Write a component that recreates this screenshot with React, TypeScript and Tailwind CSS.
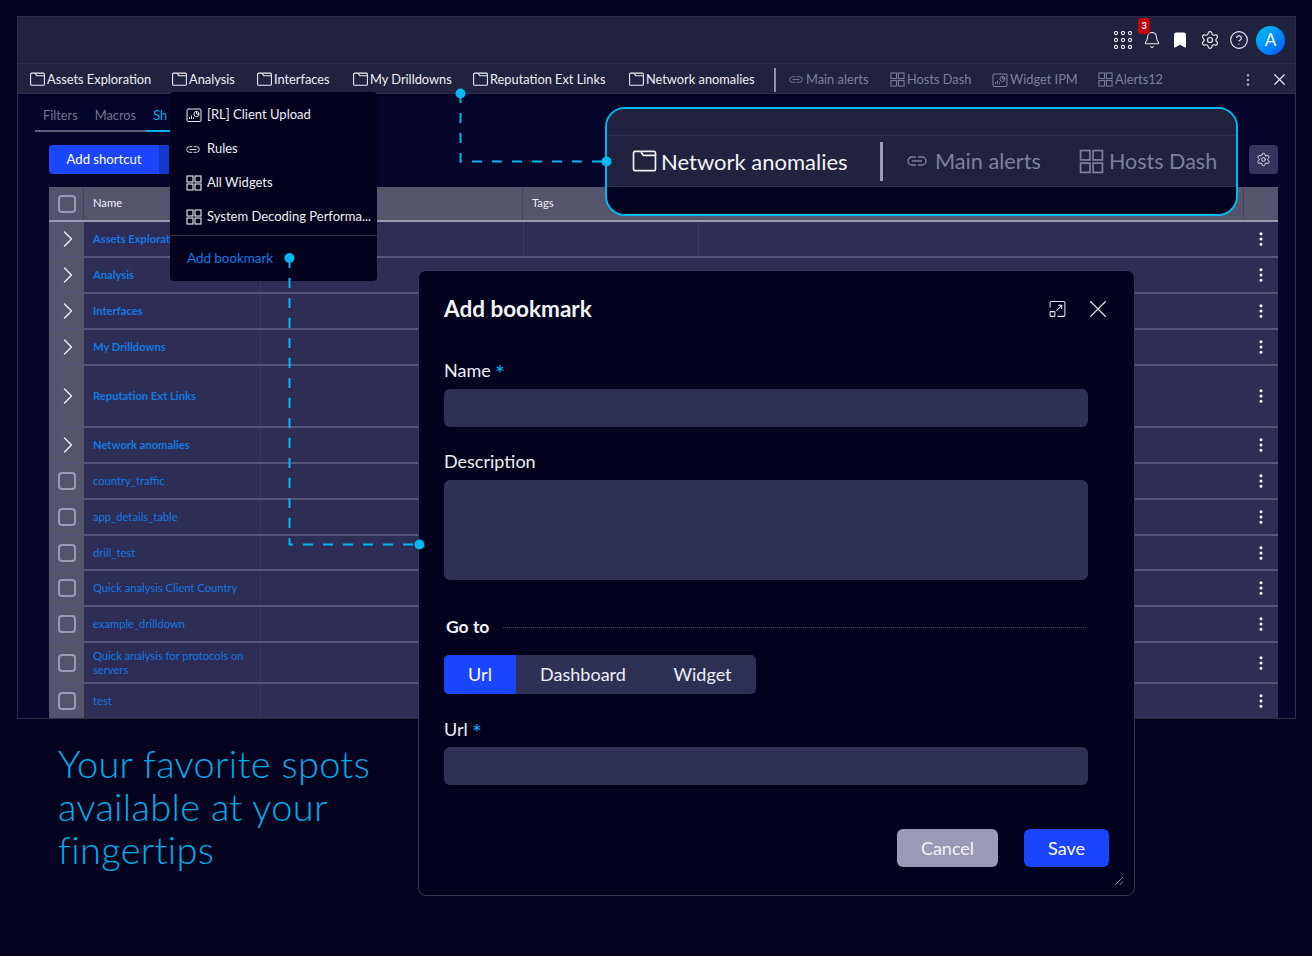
import { Bell, Bookmark, ChevronRight, CircleHelp, EllipsisVertical, Settings, X } from "lucide-react";

const FONT = "font-['Lato','Open_Sans',sans-serif]";

function FolderIcon({ size = 16 }: { size?: number }) {
  return (
    <svg width={size} height={size} viewBox="0 0 16 16" fill="none" stroke="currentColor" strokeWidth="1" className="shrink-0">
      <path d="M1.5 3a1 1 0 0 1 1-1h3.2l1.6 2.4h7.2v8a1 1 0 0 1-1 1H2.5a1 1 0 0 1-1-1z" />
      <path d="M6.2 2h7.3a1 1 0 0 1 1 1v1.4" />
    </svg>
  );
}

function GridIcon({ size = 16 }: { size?: number }) {
  return (
    <svg width={size} height={size} viewBox="0 0 16 16" fill="none" stroke="currentColor" strokeWidth="1.1" className="shrink-0">
      <rect x="1" y="1" width="6" height="6" />
      <rect x="9" y="1" width="6" height="6" />
      <rect x="1" y="9" width="6" height="6" />
      <rect x="9" y="9" width="6" height="6" />
    </svg>
  );
}

function LinkIcon({ size = 16 }: { size?: number }) {
  return (
    <svg width={size} height={size / 2} viewBox="0 0 20 10" fill="none" stroke="currentColor" strokeWidth="1.3" className="shrink-0">
      <path d="M9 1H5a4 4 0 0 0 0 8h4M11 1h4a4 4 0 0 1 0 8h-4M5 5h10" />
    </svg>
  );
}

function WidgetIcon({ size = 16 }: { size?: number }) {
  return (
    <svg width={size} height={size} viewBox="0 0 16 16" fill="none" stroke="currentColor" strokeWidth="1" className="shrink-0">
      <rect x="1" y="2" width="14" height="12.5" rx="1" />
      <circle cx="10.5" cy="7" r="2.6" />
      <path d="M10.5 4.4V7h2.6" />
      <path d="M3.5 12V10M5.5 12V8.5M7.5 12v-1.5" />
    </svg>
  );
}

function ExpandIcon() {
  return (
    <svg width="19" height="19" viewBox="0 0 18 18" fill="none" stroke="#e6e6f0" strokeWidth="1">
      <path d="M2 7V2.5a1 1 0 0 1 1-1h12a1 1 0 0 1 1 1v12a1 1 0 0 1-1 1h-6" />
      <rect x="2" y="11" width="4.5" height="4.5" rx="0.5" />
      <path d="M8 10l5-5M9.5 5H13v3.5" />
    </svg>
  );
}

function AppsIcon() {
  const dots = [2, 9, 16];
  return (
    <svg width="18" height="18" viewBox="0 0 18 18" fill="none" stroke="#e8e8f0" strokeWidth="1.1">
      {dots.map((y) => dots.map((x) => <circle key={`${x}-${y}`} cx={x} cy={y} r="1.6" />))}
    </svg>
  );
}

const NAV_FOLDERS = [
  { label: "Assets Exploration", w: "w-[142px]" },
  { label: "Analysis", w: "w-[85px]" },
  { label: "Interfaces", w: "w-[96px]" },
  { label: "My Drilldowns", w: "w-[120px]" },
  { label: "Reputation Ext Links", w: "w-[156px]" },
  { label: "Network anomalies", w: "w-[146px]" },
];

const NAV_DIM = [
  { label: "Main alerts", w: "w-[101px]", gap: "gap-[3px]", icon: <LinkIcon size={14} /> },
  { label: "Hosts Dash", w: "w-[102px]", gap: "gap-[2px]", icon: <GridIcon size={15} /> },
  { label: "Widget IPM", w: "w-[106px]", gap: "gap-[2px]", icon: <WidgetIcon size={16} /> },
  { label: "Alerts12", w: "w-[70px]", gap: "gap-[2px]", icon: <GridIcon size={15} /> },
];

const ROWS = [
  { name: "Assets Exploration", h: "h-[36px]", folder: true, first: true },
  { name: "Analysis", h: "h-[36px]", folder: true },
  { name: "Interfaces", h: "h-[36px]", folder: true },
  { name: "My Drilldowns", h: "h-[36px]", folder: true },
  { name: "Reputation Ext Links", h: "h-[62px]", folder: true },
  { name: "Network anomalies", h: "h-[36px]", folder: true },
  { name: "country_traffic", h: "h-[36px]" },
  { name: "app_details_table", h: "h-[36px]" },
  { name: "drill_test", h: "h-[35px]" },
  { name: "Quick analysis Client Country", h: "h-[36px]" },
  { name: "example_drilldown", h: "h-[36px]" },
  { name: "Quick analysis for protocols on servers", h: "h-[41px]" },
  { name: "test", h: "h-[34px]", last: true },
];

function Checkbox() {
  return <div className="ml-[1px] w-[18px] h-[18px] rounded-[4px] border-2 border-[#9a9ab4]" />;
}

function TableRow({ row }: { row: (typeof ROWS)[number] }) {
  return (
    <div className={`flex ${row.h} bg-[#2d2d55] ${row.last ? "" : "border-b-2 border-[#55557a]"}`}>
      <div className="w-[35px] bg-[#54546c] flex items-center justify-center text-[#e8e8f0]">
        {row.folder ? <ChevronRight size={28} strokeWidth={1.3} className="ml-[2px]" /> : <Checkbox />}
      </div>
      <div className={`w-[176px] pl-[9px] pr-[10px] flex items-center text-[11.2px] leading-[14px] text-[#1478e0] ${row.folder ? "font-bold" : ""}`}>
        <span>{row.name}</span>
      </div>
      <div className="flex-1 border-l border-[#3a3a60] flex">
        {row.first && (
          <>
            <div className="w-[263px] border-r border-[#3a3a60]" />
            <div className="w-[175px] border-r border-[#3a3a60]" />
          </>
        )}
      </div>
      <div className="w-[35px] flex items-center justify-center text-white">
        <EllipsisVertical size={18} strokeWidth={2} />
      </div>
    </div>
  );
}

function Field({ label, required, h, labelH = "h-[28px]" }: { label: string; required?: boolean; h: string; labelH?: string }) {
  return (
    <div className="flex flex-col w-[644px]">
      <div className={`flex text-[18px] leading-[18px] text-[#eeeef6] ${labelH}`}>
        {label}
        {required && <span className="text-[#00b0ea] text-[24px] leading-[18px] ml-[4px] relative top-[3px]">*</span>}
      </div>
      <div className={`${h} rounded-[6px] bg-[#2f3056]`} />
    </div>
  );
}

export default function App() {
  return (
    <div className={`relative w-[1312px] h-[956px] overflow-hidden bg-[#03021f] ${FONT}`}>
      {/* app window */}
      <div className="ml-[17px] mt-4 w-[1279px] h-[703px] border border-[#2b2b4a] bg-[#05052b] flex flex-col overflow-hidden">
        <div className="h-[47px] bg-[#21223f] border-b border-[#2c2d4c] flex items-center justify-end pr-[10px] text-[#e8e8f0]">
          <AppsIcon />
          <div className="relative ml-[11px]">
            <Bell size={18} strokeWidth={1.4} />
            <span className="absolute -left-[5px] -top-[13px] w-[12px] h-[16px] rounded-[2px] bg-[#c00010] text-white text-[9px] font-bold flex items-center justify-center">3</span>
          </div>
          <Bookmark size={18} fill="#ffffff" stroke="#ffffff" className="ml-[10px]" />
          <Settings size={20} strokeWidth={1.4} className="ml-[11px]" />
          <CircleHelp size={20} strokeWidth={1.4} className="ml-[9px]" />
          <div className="ml-[7px] w-[29px] h-[29px] rounded-full bg-gradient-to-br from-[#00c0f0] to-[#1a50ff] flex items-center justify-center text-white text-[17px]">A</div>
        </div>

        <div className="h-[30px] pt-[2px] bg-[#21223f] border-b border-[#2c2d4c] flex items-center pl-[11px] text-[12.8px] relative">
          {NAV_FOLDERS.map((f) => (
            <div key={f.label} className={`${f.w} shrink-0 flex items-center gap-[1px] text-[#eeeef6] whitespace-nowrap`}>
              <FolderIcon size={17} />
              <span>{f.label}</span>
            </div>
          ))}
          <div className="w-[2px] h-[24px] bg-[#8f92ad] mr-[13px]" />
          {NAV_DIM.map((f) => (
            <div key={f.label} className={`${f.w} ${f.gap} shrink-0 flex items-center text-[#7d8098] whitespace-nowrap`}>
              {f.icon}
              <span>{f.label}</span>
            </div>
          ))}
          <EllipsisVertical size={16} className="absolute right-[39px] text-[#a0a0b8]" />
          <X size={19} strokeWidth={1.5} className="absolute right-[6px] text-[#e8e8f0]" />
        </div>

        <div className="flex-1 min-h-0 pl-[17px] flex flex-col">
          <div className="w-[135px] h-[27px] mt-[12px] flex border-b-2 border-[#5f5f78] text-[12.8px] text-[#73748e] pl-2 gap-[17px] relative">
            <span>Filters</span>
            <span>Macros</span>
            <span className="text-[#00b0ea]">Sh</span>
            <div className="absolute right-0 -bottom-[2px] h-[2px] w-[24px] bg-[#00b0ea]" />
          </div>
          <div className="ml-[14px] mt-[13px] h-[29px] flex items-center justify-between pr-[17px]">
            <div className="flex h-full">
              <div className="w-[110px] bg-[#1a46ff] rounded-l-[4px] text-white text-[13.1px] flex items-center justify-center">Add shortcut</div>
              <div className="w-[10px] bg-[#1438c8]" />
            </div>
            <div className="w-[29px] h-[29px] rounded-[4px] bg-[#34345f] flex items-center justify-center text-[#e8e8f0]">
              <Settings size={15} strokeWidth={1.5} />
            </div>
          </div>

          {/* table */}
          <div className="ml-[14px] mr-[17px] mt-[13px] flex flex-col">
            <div className="flex h-[35px] bg-[#54546c] border-b-2 border-[#9a9ab4] text-[11.2px] text-[#eeeef6]">
              <div className="w-[35px] flex items-center justify-center border-r border-[#44445e]"><Checkbox /></div>
              <div className="w-[439px] pl-[9px] flex items-center border-r border-[#44445e]">Name</div>
              <div className="flex-1 pl-[9px] flex items-center">Tags</div>
              <div className="w-[35px] border-l border-[#44445e]" />
            </div>
            {ROWS.map((r) => (
              <TableRow key={r.name} row={r} />
            ))}
          </div>
        </div>
      </div>

      <h1 className="ml-[58px] mt-[23px] w-[330px] text-[38px] leading-[43px] font-light tracking-[0.3px] text-[#00aeea]">
        Your favorite spots available at your fingertips
      </h1>

      {/* bookmarks dropdown */}
      <div className="absolute left-[170px] top-[92px] w-[207px] h-[189px] rounded-[4px] bg-[#02021e] text-[13px] text-[#eeeef6] flex flex-col z-10">
        <div className="h-[34px] mt-[6px] pl-[16px] flex items-center gap-[5px]"><WidgetIcon /><span>[RL] Client Upload</span></div>
        <div className="h-[34px] pl-[16px] flex items-center gap-[7px]"><LinkIcon size={14} /><span>Rules</span></div>
        <div className="h-[34px] pl-[16px] flex items-center gap-[5px]"><GridIcon /><span>All Widgets</span></div>
        <div className="h-[34px] pl-[16px] flex items-center gap-[5px] whitespace-nowrap"><GridIcon /><span>System Decoding Performa...</span></div>
        <div className="h-[46px] mt-[1px] border-t border-[#2c2d4c] pl-[17px] flex items-center text-[13.4px] text-[#1478e0]">Add bookmark</div>
      </div>

      {/* zoomed nav callout */}
      <div className="absolute left-[605px] top-[107px] w-[633px] h-[109px] rounded-[20px] border-2 border-[#00b8f0] bg-[#03021f] overflow-hidden z-10">
        <div className="h-[27px] bg-[#21223f] border-b border-[#2e2f50]" />
        <div className="h-[51px] bg-[#21223f] border-b border-[#2e2f50] flex items-center pl-[24px] text-[22px] whitespace-nowrap">
          <span className="text-[#f2f2f8] flex items-center gap-[3px] w-[249px]"><FolderIcon size={27} />Network anomalies</span>
          <span className="w-[3px] h-[39px] bg-[#9a9db8] mr-[24px]" />
          <span className="text-[#7d8098] flex items-center gap-[8px] w-[172px] text-[21.7px]"><LinkIcon size={20} />Main alerts</span>
          <span className="text-[#7d8098] flex items-center gap-[5px] text-[21.5px]"><GridIcon size={25} />Hosts Dash</span>
        </div>
      </div>

      {/* add bookmark modal */}
      <div className="absolute left-[418px] top-[270px] w-[717px] h-[626px] rounded-[8px] border border-[#35355a] bg-[#02021e] pl-[25px] flex flex-col z-10">
        <div className="flex items-center justify-between h-[22px] mt-[27px] pr-[21px]">
          <h2 className="text-[22.5px] font-bold text-[#f4f4fa]">Add bookmark</h2>
          <div className="flex items-center gap-[16px] text-[#e6e6f0]">
            <ExpandIcon />
            <X size={30} strokeWidth={0.9} />
          </div>
        </div>
        <div className="mt-[41px]"><Field label="Name" required h="h-[38px]" /></div>
        <div className="mt-[25px]"><Field label="Description" h="h-[100px]" /></div>
        <div className="mt-[38px] ml-[2px] w-[640px] h-[18px] flex items-center gap-[14px]">
          <span className="text-[17.5px] font-bold text-[#f4f4fa]">Go to</span>
          <div className="flex-1 border-t border-dotted border-[#45455f]" />
        </div>
        <div className="mt-[19px] w-[312px] h-[39px] rounded-[5px] bg-[#2f3056] overflow-hidden flex text-[18px] text-[#eeeef6]">
          <div className="w-[72px] bg-[#1a46ff] flex items-center justify-center text-white">Url</div>
          <div className="w-[134px] flex items-center justify-center">Dashboard</div>
          <div className="flex-1 flex items-center justify-center -ml-[1px]">Widget</div>
        </div>
        <div className="mt-[26px]"><Field label="Url" required h="h-[38px]" labelH="h-[27px]" /></div>
        <div className="mt-[44px] pr-[25px] flex justify-end gap-[26px] text-[18px]">
          <div className="w-[101px] h-[38px] rounded-[6px] bg-[#9a9ab8] text-[#f0f0f6] flex items-center justify-center">Cancel</div>
          <div className="w-[85px] h-[38px] rounded-[6px] bg-[#1a46ff] text-white flex items-center justify-center">Save</div>
        </div>
        <svg width="10" height="10" viewBox="0 0 10 10" className="absolute right-[10px] bottom-[9px]" stroke="#8a8aa0" strokeWidth="1">
          <path d="M1 9L9 1M5.5 9L9 5.5" />
        </svg>
      </div>

      {/* connectors */}
      <svg width="1312" height="956" className="absolute inset-0 pointer-events-none z-20" fill="none" stroke="#00b8f0" strokeWidth="2">
        <path d="M460.5 93V161.5H606" strokeDasharray="10 10" />
        <path d="M289.5 258V544.5H419" strokeDasharray="10 10" />
        <circle cx="460.5" cy="93.5" r="5" fill="#00b8f0" stroke="none" />
        <circle cx="606.5" cy="161.5" r="5" fill="#00b8f0" stroke="none" />
        <circle cx="289.5" cy="258" r="5" fill="#00b8f0" stroke="none" />
        <circle cx="419.5" cy="544.5" r="5" fill="#00b8f0" stroke="none" />
      </svg>
    </div>
  );
}
